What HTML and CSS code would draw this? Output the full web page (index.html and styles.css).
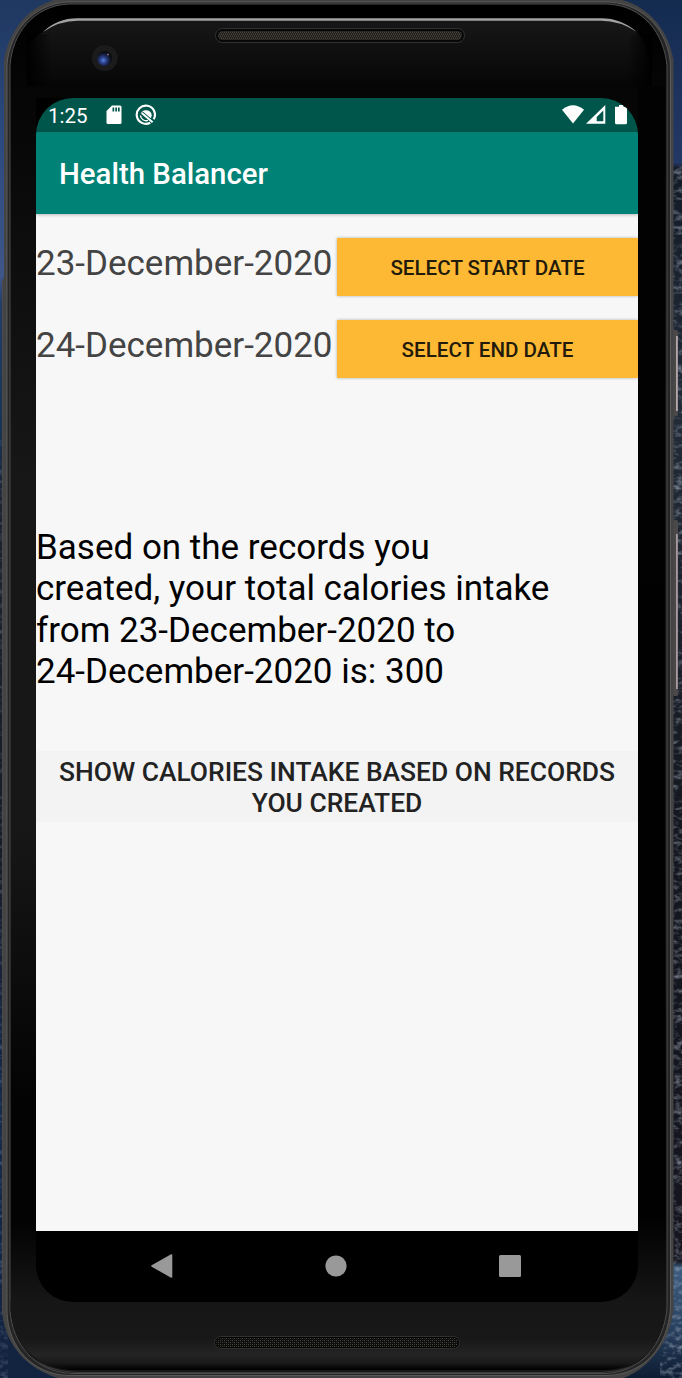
FILE: index.html
```
<!DOCTYPE html>
<html lang="en">
<head>
<meta charset="utf-8">
<title>Health Balancer</title>
<link rel="stylesheet" href="styles.css">
</head>
<body>
<div class="desktop">
  <svg class="device" width="682" height="1378" viewBox="0 0 682 1378" aria-hidden="true">
    <defs>
      <linearGradient id="skyL" x1="0" y1="0" x2="0" y2="1">
        <stop offset="0" stop-color="#1f3860"/><stop offset=".1" stop-color="#2c4a80"/>
        <stop offset=".2" stop-color="#3f5688"/><stop offset=".22" stop-color="#223e68"/>
        <stop offset=".31" stop-color="#173354"/><stop offset=".36" stop-color="#1b2230"/>
        <stop offset=".62" stop-color="#171b26"/><stop offset=".8" stop-color="#15294a"/>
        <stop offset="1" stop-color="#12233f"/>
      </linearGradient>
      <linearGradient id="skyR" x1="0" y1="0" x2="0" y2="1">
        <stop offset="0" stop-color="#142b50"/><stop offset=".118" stop-color="#243866"/>
        <stop offset=".122" stop-color="#141b28"/><stop offset=".3" stop-color="#222b38"/>
        <stop offset=".6" stop-color="#14171f"/><stop offset=".915" stop-color="#15151f"/>
        <stop offset=".92" stop-color="#3d5d80"/><stop offset=".96" stop-color="#2b4463"/>
        <stop offset="1" stop-color="#0d1d33"/>
      </linearGradient>
      <linearGradient id="glass" x1="0" y1="0" x2="0" y2="1">
        <stop offset="0" stop-color="#000"/><stop offset=".06" stop-color="#050505"/>
        <stop offset=".18" stop-color="#0d0d0d"/><stop offset=".35" stop-color="#171717"/>
        <stop offset=".6" stop-color="#171717"/><stop offset=".8" stop-color="#030303"/>
        <stop offset=".89" stop-color="#030303"/><stop offset=".95" stop-color="#171717"/>
        <stop offset="1" stop-color="#171717"/>
      </linearGradient>
      <linearGradient id="rightGlass" x1="0" y1="0" x2="0" y2="1">
        <stop offset="0" stop-color="#020202"/><stop offset=".93" stop-color="#010101"/>
        <stop offset="1" stop-color="#151515"/>
      </linearGradient>
      <linearGradient id="brow" x1="0" y1="0" x2="0" y2="1">
        <stop offset="0" stop-color="#171717"/><stop offset=".85" stop-color="#090909"/>
        <stop offset="1" stop-color="#050505"/>
      </linearGradient>
      <linearGradient id="chin" x1="0" y1="0" x2="0" y2="1">
        <stop offset="0" stop-color="#161616"/><stop offset=".55" stop-color="#181818"/>
        <stop offset=".78" stop-color="#242424"/><stop offset=".9" stop-color="#191919"/>
        <stop offset="1" stop-color="#000"/>
      </linearGradient>
      <linearGradient id="browSide" x1="0" x2="1">
        <stop offset="0" stop-color="#000"/><stop offset=".04" stop-color="#000" stop-opacity="0"/>
        <stop offset=".96" stop-color="#000" stop-opacity="0"/><stop offset="1" stop-color="#000"/>
      </linearGradient>
      <pattern id="mesh" width="4" height="4" patternUnits="userSpaceOnUse">
        <rect width="4" height="4" fill="#1f1d1a"/>
        <path d="M0 0h1v1H0zM2 0h1v1H2zM1 2h1v1H1zM3 2h1v1H3z" fill="#4b463d"/>
        <path d="M1 1h1v1H1zM3 1h1v1H3zM0 3h1v1H0zM2 3h1v1H2z" fill="#34302a"/>
      </pattern>
      <pattern id="mesh2" width="4" height="4" patternUnits="userSpaceOnUse">
        <rect width="4" height="4" fill="#0e0e0d"/>
        <path d="M0 0h1v1H0zM2 2h1v1H2z" fill="#4d4941"/>
        <path d="M2 0h1v1H2zM0 2h1v1H0z" fill="#2f2d29"/>
      </pattern>
      <filter id="rock" x="0" y="0" width="1" height="1">
        <feTurbulence type="fractalNoise" baseFrequency=".12 .2" numOctaves="3" seed="4"/>
        <feColorMatrix values="0 0 0 0 .4  0 0 0 0 .46  0 0 0 0 .55  2.4 0 0 0 -1.1"/>
      </filter>
      <radialGradient id="lens" cx=".42" cy=".62" r=".6">
        <stop offset="0" stop-color="#5a80dc"/><stop offset=".35" stop-color="#2a3f86"/>
        <stop offset=".75" stop-color="#11152b"/><stop offset="1" stop-color="#08080c"/>
      </radialGradient>
    </defs>
    <rect width="340" height="1378" fill="url(#skyL)"/>
    <rect x="340" width="342" height="1378" fill="url(#skyR)"/>
    <rect x="660" y="166" width="22" height="1212" filter="url(#rock)" opacity=".6"/>
    <rect y="440" width="8" height="938" filter="url(#rock)" opacity=".3"/>
    <rect x="2" y="280" width="3" height="1034" fill="#54524f"/>
    <rect x="673" y="330" width="5" height="86" rx="1.5" fill="#4b484a"/>
    <rect x="676" y="336" width="1.8" height="75" fill="#b3a6a8"/>
    <rect x="673" y="520" width="5" height="176" rx="1.5" fill="#4b484a"/>
    <rect x="676" y="534" width="1.8" height="155" fill="#a79a9c"/>
    <path d="M54 0H622C650 7 669 32 673.500 60V1308C671 1338 653 1366 624 1378H58C28 1369 6 1346 2.500 1315V280L4 278V60C9 31 27 8 54 0Z" fill="#444"/>
    <path d="M66 2H610C646 5 668 32 670.500 64V1308C668 1347 644 1374 608 1375.500H68C32 1374 8 1347 7 1312V64C10 32 32 5 66 2Z" fill="#252525" stroke="#5a5a5a" stroke-width="1"/>
    <path d="M68 4H608C643 6 664 33 667 66V1308C664 1345 640 1372 606 1373.500H72C36 1372 12 1345 10 1310V66C12 33 34 6 68 4Z" fill="url(#glass)" stroke="#4c4c4c" stroke-width="1"/>
    <rect x="638" y="86" width="27" height="1215" fill="url(#rightGlass)"/>
    <path d="M27 86V52Q31 38 43 32Q56 20 78 20H601Q622 20 636 32Q650 42 652 86Z" fill="url(#brow)"/>
    <rect x="27" y="34" width="625" height="52" fill="url(#browSide)"/>
    <path d="M43 32Q57 18 78 18.200H601Q621 18 637 32Q620 20.700 601 20.700H78Q59 20.700 43 32Z" fill="#a2a2a2"/>
    <path d="M10.500 1301H665.500V1310C662 1346 640 1369 606 1370H72C38 1369 14 1346 10.500 1310Z" fill="url(#chin)"/>
    <path d="M28 1355Q46 1371 76 1372.500H602Q634 1371 650 1354" fill="none" stroke="#3d3d3d"/>
    <rect x="215.500" y="28.500" width="249" height="14" rx="7" fill="#070707" stroke="#333"/>
    <rect x="218" y="31" width="244" height="9" rx="4.500" fill="url(#mesh)"/>
    <rect x="214.500" y="1336.500" width="245" height="12" rx="6" fill="#050505" stroke="#303030"/>
    <rect x="216" y="1338" width="242" height="9" rx="4.500" fill="url(#mesh2)"/>
    <circle cx="104.700" cy="58" r="13" fill="#1b1b1c"/>
    <circle cx="104.500" cy="58.500" r="7.600" fill="url(#lens)"/>
    <circle cx="108" cy="54.500" r="1" fill="#806a80"/>
    <rect x="36" y="98" width="50" height="50" fill="#000"/>
  </svg>

  <main class="screen">
    <header class="status">
      <span class="clock">1:25</span>
      <svg class="sd" width="16" height="20" viewBox="0 0 16 20"><path d="M6 .5H14Q15.500 .5 15.500 2V17.500Q15.500 19 14 19H2Q.5 19 .5 17.500V6Z" fill="#fff"/><path d="M6.500 2.500h1.700v4H6.500zM9.300 2.500H11v4H9.300zM12 2.500h1.700v4H12z" fill="#00564b"/></svg>
      <svg class="mark" width="22" height="22" viewBox="0 0 22 22" fill="none" stroke="#fff"><path d="M15.200 18.700A9.100 9.100 0 1 1 18.700 15.300" stroke-width="2.200"/><path d="M5.400 10.200A5.900 5.900 0 0 1 16.800 11.500L15.800 14.200L7.800 7.400Z" fill="#fff" stroke="none"/><path d="M6.800 9L17.600 18.200" stroke-width="2"/><path d="M5.500 11.500A5.700 5.700 0 0 0 13 16.400" stroke-width="1.400"/></svg>
      <span class="spring"></span>
      <svg class="wifi" width="22" height="19" viewBox="0 0 22 19"><path d="M0 4.800Q11-4.500 22 4.800L11 18.500Z" fill="#fff"/></svg>
      <svg class="signal" width="20" height="19" viewBox="0 0 20 19"><path fill-rule="evenodd" d="M0 18.700L19.300 0V18.700ZM10.700 16.300H17.300V5.500L10.700 12Z" fill="#fff"/></svg>
      <svg class="battery" width="12" height="20" viewBox="0 0 12 20"><path d="M4 0H8.500V1.800H12V17.800Q12 19.300 10.500 19.300H1.500Q0 19.300 0 17.800V1.800H4Z" fill="#fff"/></svg>
    </header>
    <h1 class="appbar">Health Balancer</h1>
    <section class="content">
      <div class="row"><span class="date">23-December-2020</span><button class="pick">SELECT START DATE</button></div>
      <div class="row"><span class="date">24-December-2020</span><button class="pick">SELECT END DATE</button></div>
      <p class="result">Based on the records you<br>created, your total calories intake<br>from 23-December-2020 to<br>24-December-2020 is: 300</p>
      <button class="show">SHOW CALORIES INTAKE BASED ON RECORDS<br>YOU CREATED</button>
    </section>
    <nav class="nav">
      <svg width="22" height="24" viewBox="0 0 22 24"><path d="M1 12L20.500 1V23Z" fill="#999" stroke="#999" stroke-width="1.600" stroke-linejoin="round"/></svg>
      <svg width="22" height="22" viewBox="0 0 22 22"><circle cx="11" cy="11" r="10.600" fill="#999"/></svg>
      <svg width="22" height="22" viewBox="0 0 22 22"><rect width="22" height="22" rx="1.500" fill="#999"/></svg>
    </nav>
  </main>
</div>
</body>
</html>
```
FILE: styles.css
```
* { box-sizing: border-box; }
body { margin: 0; background: #000; font-family: Roboto, "Liberation Sans", sans-serif; }
.desktop { position: relative; width: 682px; height: 1378px; overflow: hidden; padding: 98px 44px 76px 36px; }
.device { position: absolute; left: 0; top: 0; }
.screen { position: relative; display: flex; flex-direction: column; width: 602px; height: 1204px; border-radius: 37px; overflow: hidden; }
.status { display: flex; height: 34px; padding-left: 12px; padding-right: 11px; background: #00564b; color: #fff; }
.status svg { flex: none; }
.clock { width: 58px; font-size: 20.5px; line-height: 36px; }
.sd { margin-top: 7px; }
.mark { margin: 6px 0 0 13px; }
.spring { flex: 1; }
.wifi { margin-top: 7px; }
.signal { margin: 7px 0 0 2px; }
.battery { margin: 7px 0 0 9px; }
.appbar { flex: none; position: relative; height: 82px; margin: 0; padding-left: 23px; background: #008376; color: #fff; font-size: 29.4px; font-weight: 500; line-height: 85px; box-shadow: 0 1px 3px rgba(0,0,0,.25); }
.content { flex: 1; display: flex; flex-direction: column; padding-top: 24px; background: #f7f7f7; }
.row { display: flex; height: 58px; margin-bottom: 24px; }
.date { width: 301px; color: #444; font-size: 35px; line-height: 51px; white-space: nowrap; }
.pick { flex: 1; border: 0; padding: 2px 0 0; background: #fdb933; color: #221b0b; font: 500 20.6px Roboto, sans-serif; box-shadow: 0 0 3px rgba(0,0,0,.28); }
.result { margin: 125px 0 0; color: #000; font-size: 35px; line-height: 41.4px; white-space: nowrap; }
.show { height: 71px; margin-top: 58px; border: 0; padding: 3px 0 0; background: #f3f3f3; color: #222; font: 500 26.4px/30.4px Roboto, sans-serif; white-space: nowrap; }
.nav { display: flex; justify-content: space-between; align-items: center; height: 71px; padding: 0 117px 2px 115px; background: #000; }
```
